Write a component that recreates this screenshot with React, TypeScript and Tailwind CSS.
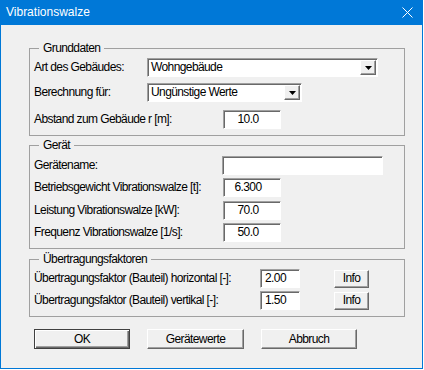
import React from 'react'

const font = { fontFamily: '"Liberation Sans", Arial, sans-serif' }

function Sunken({ className, children }: { className?: string; children?: React.ReactNode }) {
  return (
    <div
      className={
        'flex h-[19px] items-center border border-t-[#a0a0a0] border-l-[#a0a0a0] border-r-white border-b-white bg-white shadow-[inset_1px_1px_0_#696969] ' +
        (className ?? '')
      }
    >
      {children}
    </div>
  )
}

function Select({ value, width }: { value: string; width: string }) {
  return (
    <Sunken className={width + ' justify-between pl-[3px] pr-[1px]'}>
      <span>{value}</span>
      <span className="flex h-[15px] w-[16px] items-center justify-center border border-t-white border-l-white border-r-[#696969] border-b-[#696969] bg-[#f0f0f0] shadow-[inset_-1px_-1px_0_#a0a0a0]">
        <svg width="7" height="4" viewBox="0 0 7 4">
          <path d="M0 0h7L3.5 4z" fill="#000" />
        </svg>
      </span>
    </Sunken>
  )
}

function Num({ value, width, left }: { value: string; width: string; left?: boolean }) {
  return (
    <Sunken className={width + (left ? ' pl-[4px]' : ' justify-center pr-[8px]')}>
      <span>{value}</span>
    </Sunken>
  )
}

function Button({ label, width, primary }: { label: string; width: string; primary?: boolean }) {
  return (
    <div
      className={
        'flex items-center justify-center bg-[#f0f0f0] ' +
        width +
        (primary
          ? ' h-[20px] border border-[#404040] shadow-[inset_1px_1px_0_#fff,inset_-1px_-1px_0_#696969,inset_-2px_-2px_0_#a0a0a0]'
          : ' border border-t-white border-l-white border-r-[#696969] border-b-[#696969] shadow-[inset_-1px_-1px_0_#a0a0a0]')
      }
    >
      {label}
    </div>
  )
}

function Group({ title, className, children }: { title: string; className?: string; children: React.ReactNode }) {
  return (
    <fieldset className={'w-[376px] border border-[#a0a0a0] px-[4px] pb-[6px] ' + (className ?? '')}>
      <legend className="ml-[5px] px-[4px] leading-[14px]">{title}</legend>
      {children}
    </fieldset>
  )
}

function Row({ label, labelWidth, className, children }: { label: string; labelWidth: string; className?: string; children: React.ReactNode }) {
  return (
    <div className={'flex h-[19px] items-center ' + (className ?? '')}>
      <div className={labelWidth + ' whitespace-nowrap'}>{label}</div>
      {children}
    </div>
  )
}

export default function App() {
  return (
    <div className="h-[370px] w-[424px] bg-white" style={font}>
      <div className="flex h-[369px] w-[423px] flex-col bg-[#0078d7] px-[1px] pb-[1px] text-[12px] leading-[15px] tracking-[-0.6px] text-black">
        <div className="flex h-[25px] items-center justify-between pl-[5px] pr-[9px] text-white">
          <span className="text-[12px] tracking-normal">Vibrationswalze</span>
          <svg width="11" height="11" viewBox="0 0 11 11">
            <path d="M0.5 0.5l10 10M10.5 0.5l-10 10" stroke="#fff" strokeWidth="1" />
          </svg>
        </div>
        <div className="flex flex-1 flex-col bg-[#f0f0f0] pl-[28px]">
          <Group title="Grunddaten" className="mt-[16px] pt-[3px]">
            <Row label="Art des Gebäudes:" labelWidth="w-[113px]">
              <Select value="Wohngebäude" width="w-[231px]" />
            </Row>
            <Row label="Berechnung für:" labelWidth="w-[113px]" className="mt-[6px]">
              <Select value="Ungünstige Werte" width="w-[155px]" />
            </Row>
            <Row label="Abstand zum Gebäude r [m]:" labelWidth="w-[189px]" className="mt-[8px]">
              <Num value="10.0" width="w-[58px]" />
            </Row>
          </Group>
          <Group title="Gerät" className="mt-[2px] pt-[4px]">
            <Row label="Gerätename:" labelWidth="w-[188px]">
              <Sunken className="w-[161px]" />
            </Row>
            <Row label="Betriebsgewicht Vibrationswalze [t]:" labelWidth="w-[189px]" className="mt-[3px]">
              <Num value="6.300" width="w-[58px]" />
            </Row>
            <Row label="Leistung Vibrationswalze [kW]:" labelWidth="w-[189px]" className="mt-[4px]">
              <Num value="70.0" width="w-[58px]" />
            </Row>
            <Row label="Frequenz Vibrationswalze [1/s]:" labelWidth="w-[189px]" className="mt-[3px]">
              <Num value="50.0" width="w-[58px]" />
            </Row>
          </Group>
          <Group title="Übertragungsfaktoren" className="mt-[3px] pt-[3px]">
            <Row label="Übertragungsfaktor (Bauteil) horizontal [-]:" labelWidth="w-[226px]">
              <Num value="2.00" width="w-[40px]" left />
              <div className="ml-[34px] flex h-[18px]">
                <Button label="Info" width="w-[35px]" />
              </div>
            </Row>
            <Row label="Übertragungsfaktor (Bauteil) vertikal [-]:" labelWidth="w-[226px]" className="mt-[3px]">
              <Num value="1.50" width="w-[40px]" left />
              <div className="ml-[34px] flex h-[18px]">
                <Button label="Info" width="w-[35px]" />
              </div>
            </Row>
          </Group>
          <div className="ml-[5px] mt-[12px] flex h-[20px] gap-[17px]">
            <Button label="OK" width="w-[96px]" primary />
            <Button label="Gerätewerte" width="w-[97px]" />
            <Button label="Abbruch" width="w-[96px]" />
          </div>
        </div>
      </div>
    </div>
  )
}
